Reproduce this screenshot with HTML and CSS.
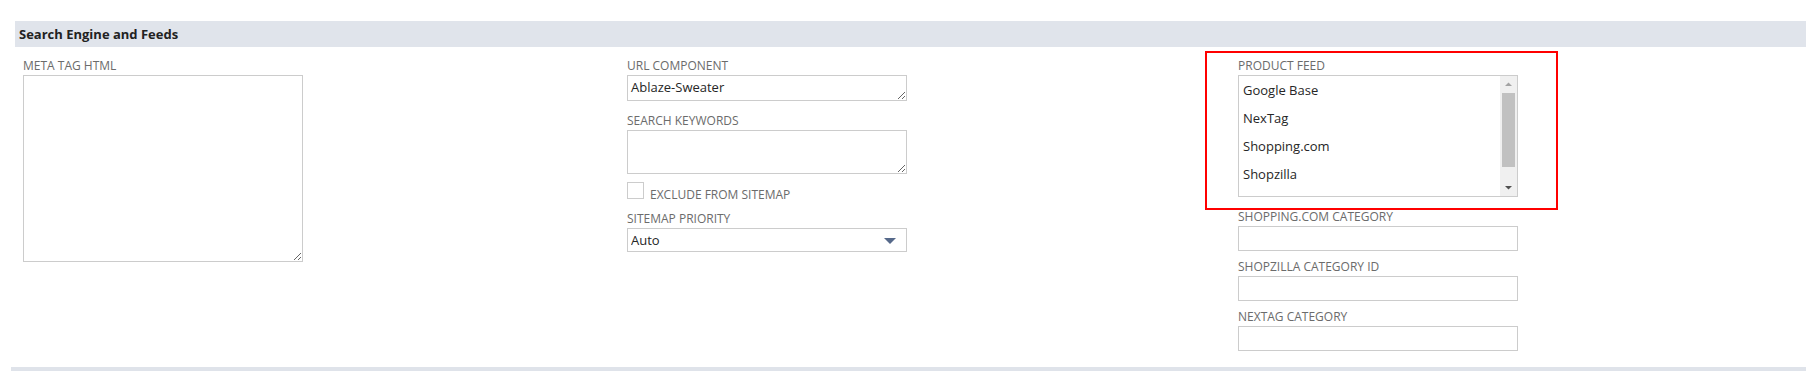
FILE: index.html
```html
<!DOCTYPE html>
<html lang="en">
<head>
    <meta charset="UTF-8">
    <title>Item - Search Engine and Feeds</title>
    <link rel="stylesheet" href="styles.css">
</head>
<body>

    <div class="section-head">Search Engine and Feeds</div>

    <div class="section-body">
        <div class="col">
            <div class="field">
                <label for="meta-tag-html">META TAG HTML</label>
                <textarea id="meta-tag-html" class="meta-area"></textarea>
            </div>
        </div>

        <div class="col">
            <div class="field spaced">
                <label for="url-component">URL COMPONENT</label>
                <textarea id="url-component" class="short-area">Ablaze-Sweater</textarea>
            </div>
            <div class="field">
                <label for="search-keywords">SEARCH KEYWORDS</label>
                <textarea id="search-keywords" class="mid-area"></textarea>
            </div>
            <div class="check-row">
                <input type="checkbox" id="exclude-sitemap">
                <label for="exclude-sitemap">EXCLUDE FROM SITEMAP</label>
            </div>
            <div class="field">
                <label for="sitemap-priority">SITEMAP PRIORITY</label>
                <div class="dropdown">
                    <select id="sitemap-priority">
                        <option selected>Auto</option>
                        <option>0.0</option>
                        <option>0.5</option>
                        <option>1.0</option>
                    </select>
                    <svg class="dropdown-arrow" width="12" height="6" viewBox="0 0 12 6"><path d="M0 0h12L6 6z" fill="#56698a"/></svg>
                </div>
            </div>
        </div>

        <div class="col">
            <div class="field spaced highlighted">
                <label>PRODUCT FEED</label>
                <div class="listbox">
                    <div class="list-items">
                        <div class="list-item">Google Base</div>
                        <div class="list-item">NexTag</div>
                        <div class="list-item">Shopping.com</div>
                        <div class="list-item">Shopzilla</div>
                    </div>
                    <div class="scrollbar">
                        <svg class="scroll-btn" width="17" height="17" viewBox="0 0 17 17"><path d="M5 10h7L8.5 6.5z" fill="#a3a3a3"/></svg>
                        <div class="scroll-track"><div class="scroll-thumb"></div></div>
                        <svg class="scroll-btn" width="17" height="17" viewBox="0 0 17 17"><path d="M5 7h7L8.5 10.5z" fill="#505050"/></svg>
                    </div>
                </div>
                <div class="highlight-box"></div>
            </div>
            <div class="field">
                <label for="shopping-category">SHOPPING.COM CATEGORY</label>
                <input type="text" id="shopping-category">
            </div>
            <div class="field">
                <label for="shopzilla-id">SHOPZILLA CATEGORY ID</label>
                <input type="text" id="shopzilla-id">
            </div>
            <div class="field">
                <label for="nextag-category">NEXTAG CATEGORY</label>
                <input type="text" id="nextag-category">
            </div>
        </div>
    </div>

    <div class="section-head next"></div>

</body>
</html>
```

FILE: styles.css
```css
body {
    margin: 0;
    background: #fff;
    color: #262626;
    font-family: "Open Sans", "Liberation Sans", sans-serif;
    font-size: 13px;
}

.section-head {
    margin: 21px 0 0 15px;
    height: 26px;
    line-height: 26px;
    padding-left: 4px;
    background: #e0e4eb;
    color: #222;
    font-weight: bold;
    font-size: 13px;
}

.section-head.next {
    margin: 0 0 0 11px;
    height: 4px;
    background: #dfe3ea;
}

.section-body {
    display: grid;
    grid-template-columns: 604px 611px 1fr;
    padding: 11px 0 8px 23px;
}

.field {
    margin-bottom: 8px;
}

/* textareas and the list box sit a little further from the next label */
.field.spaced {
    margin-bottom: 12px;
}

.field label,
.check-row label {
    display: block;
    font-size: 12px;
    line-height: 16px;
    color: #6b6b6b;
    margin-bottom: 1px;
}

textarea,
input[type="text"],
select {
    display: block;
    box-sizing: border-box;
    width: 280px;
    margin: 0;
    border: 1px solid #cccccc;
    border-radius: 0;
    background: #fff;
    color: #262626;
    font-family: "Open Sans", "Liberation Sans", sans-serif;
    font-size: 13px;
    outline: none;
}

textarea {
    padding: 2px 3px;
    resize: both;
    overflow: hidden;
}

.meta-area {
    height: 187px;
}

.short-area {
    height: 26px;
    line-height: 18px;
}

.mid-area {
    height: 44px;
}

input[type="text"] {
    height: 25px;
    padding: 0 4px;
}

.check-row {
    display: flex;
    align-items: baseline;
    gap: 6px;
    margin-bottom: 8px;
}

.check-row input {
    appearance: none;
    width: 17px;
    height: 17px;
    margin: 0;
    border: 1px solid #cccccc;
    background: #fff;
}

.check-row label {
    margin: 0;
}

.dropdown {
    position: relative;
    width: 280px;
}

.dropdown select {
    appearance: none;
    height: 24px;
    padding: 0 3px;
}

.dropdown-arrow {
    position: absolute;
    right: 11px;
    top: 10px;
}

.highlighted {
    position: relative;
}

.listbox {
    display: flex;
    width: 280px;
    height: 122px;
    box-sizing: border-box;
    border: 1px solid #cccccc;
    overflow: hidden;
}

.list-items {
    flex: 1;
}

.list-item {
    height: 28px;
    line-height: 28px;
    padding-left: 4px;
    font-size: 13px;
    color: #262626;
}

.scrollbar {
    width: 17px;
    display: flex;
    flex-direction: column;
    background: #f0f0f0;
}

.scroll-track {
    flex: 1;
    padding: 0 2px;
}

.scroll-thumb {
    height: 74px;
    background: #c1c1c1;
}

.highlight-box {
    position: absolute;
    left: -33px;
    top: -7px;
    width: 353px;
    height: 159px;
    box-sizing: border-box;
    border: 2px solid #ff0000;
    pointer-events: none;
}
```
